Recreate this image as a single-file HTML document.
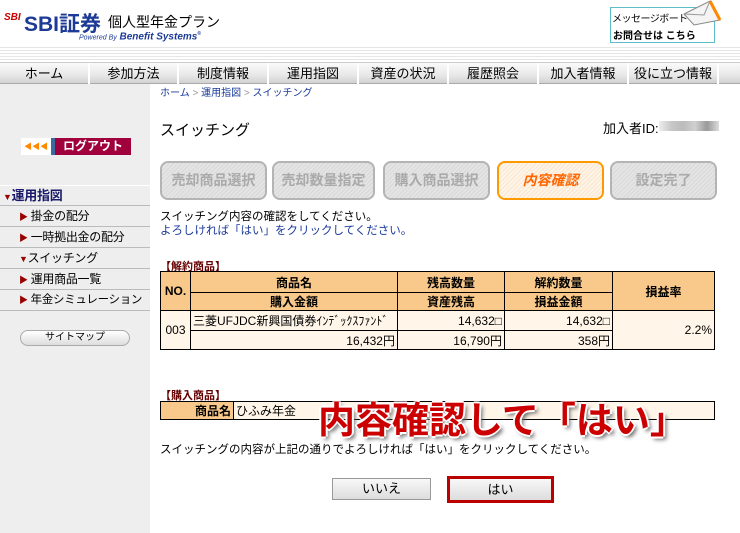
<!DOCTYPE html>
<html><head><meta charset="utf-8"><style>
*{margin:0;padding:0;box-sizing:border-box}
body{width:740px;height:533px;overflow:hidden;background:#fff;font-family:"Liberation Sans","Noto Sans CJK JP",sans-serif;font-size:12px;color:#000;position:relative}
.a{position:absolute;white-space:nowrap}
.stripe{position:absolute;left:0;top:45px;width:740px;height:17px;background:repeating-linear-gradient(#fff 0,#fff 2px,#e6e6e6 2px,#e6e6e6 3px)}
.nav{position:absolute;left:0;top:62px;width:740px;height:22px;background:linear-gradient(#fafafa,#e8e8e8 60%,#d2d2d2);border-top:1px solid #ccc;border-bottom:1px solid #aaa}
.nav div{position:absolute;top:0;height:21px;line-height:21px;text-align:center;font-size:13px;border-right:2px solid #fff}
.side{position:absolute;left:0;top:84px;width:150px;height:449px;background:#eee}
.mi{position:absolute;left:0;width:150px;border-bottom:1px solid #bbb;font-size:12px;height:21px;line-height:20px;white-space:nowrap;overflow:hidden;letter-spacing:-0.3px}
.tri{color:#900;font-size:9px}
.step{position:absolute;top:161px;height:39px;border:2px solid #b4b4b4;border-radius:8px;background:repeating-linear-gradient(135deg,#e4e4e4 0,#e4e4e4 2px,#d8d8d8 2px,#d8d8d8 3px);color:#aaa;font-weight:bold;font-size:14px;line-height:35px;text-align:center;white-space:nowrap}
table{border-collapse:collapse;position:absolute}
td{border:1px solid #000;font-size:12px;padding:0 2px}
.h{background:#f8c98a;font-weight:bold;text-align:center}
.d{background:#fff6e9}
</style></head><body>
<div class="a" style="left:4px;top:12px;font-size:10px;font-weight:bold;color:#c00;font-style:italic">SBI</div>
<div class="a" style="left:24px;top:8px;font-size:21px;font-weight:bold;color:#1c3a96">SBI証券</div>
<div class="a" style="left:108px;top:12px;font-size:14px">個人型年金プラン</div>
<div class="a" style="left:79px;top:31px;font-size:10px;font-weight:bold;font-style:italic;color:#1c3a96"><span style="font-size:7px;font-weight:normal">Powered By</span> Benefit Systems<sup style="font-size:5px">®</sup></div>
<div class="a" style="left:610px;top:7px;width:105px;height:36px;border:1px solid #5bbec8;background:#fff">
<div style="font-size:10px;padding:2px 1px;letter-spacing:-0.5px">メッセージボード</div>
<div style="font-size:10px;font-weight:bold;padding:0 2px">お問合せは こちら</div></div>
<svg class="a" style="left:682px;top:0" width="40" height="26"><path d="M2 14 L28 1 L38 20 L12 25Z" fill="#f4f4f4" stroke="#888"/><path d="M28 1 L38 20" stroke="#f80" stroke-width="3"/><path d="M2 14 L22 15 L28 1" fill="none" stroke="#999"/></svg>
<div class="stripe"></div>
<div class="nav">
<div style="left:0;width:90px">ホーム</div><div style="left:90px;width:89px">参加方法</div><div style="left:179px;width:90px">制度情報</div><div style="left:269px;width:90px">運用指図</div><div style="left:359px;width:90px">資産の状況</div><div style="left:449px;width:90px">履歴照会</div><div style="left:539px;width:90px">加入者情報</div><div style="left:629px;width:90px">役に立つ情報</div>
</div>
<div class="side">
<div class="a" style="left:21px;top:54px;width:110px;height:17px;border-bottom:2px solid #222"><div style="position:absolute;left:0;width:30px;height:17px;background:#fff;color:#f80;font-size:8px;line-height:17px;text-align:center">◀◀◀</div><div style="position:absolute;left:30px;width:4px;height:17px;background:#3a6aa0"></div><div style="position:absolute;left:34px;width:76px;height:17px;background:#a0003c;color:#fff;font-weight:bold;font-size:12px;line-height:17px;text-align:center">ログアウト</div></div>
<div class="mi" style="top:101px;border-top:1px solid #fff;font-weight:bold;color:#1a1a6a;font-size:13px;padding-left:3px"><span class="tri">▼</span>運用指図</div>
<div class="mi" style="top:122px;padding-left:19px"><span class="tri">▶</span> 掛金の配分</div>
<div class="mi" style="top:143px;padding-left:19px"><span class="tri">▶</span> 一時拠出金の配分</div>
<div class="mi" style="top:164px;padding-left:19px"><span class="tri">▼</span>スイッチング</div>
<div class="mi" style="top:185px;padding-left:19px"><span class="tri">▶</span> 運用商品一覧</div>
<div class="mi" style="top:206px;padding-left:19px;font-size:11.5px"><span class="tri">▶</span> 年金シミュレーション</div>
<div class="a" style="left:20px;top:246px;width:110px;height:16px;border:1px solid #aaa;border-radius:8px;background:linear-gradient(#fff,#ddd);font-size:10px;text-align:center;line-height:14px">サイトマップ</div>
</div>
<div class="a" style="left:160px;top:84px;font-size:10px;color:#1a3a9a">ホーム <span style="color:#999">&gt;</span> 運用指図 <span style="color:#999">&gt;</span> スイッチング</div>
<div class="a" style="left:160px;top:119px;font-size:15px">スイッチング</div>
<div class="a" style="left:603px;top:118px;font-size:13px">加入者ID:</div>
<div class="a" style="left:659px;top:121px;width:60px;height:10px;background:linear-gradient(90deg,#eee,#c8c8c8,#bbb,#d0d0d0,#999,#ddd)"></div>
<div class="step" style="left:160px;width:107px">売却商品選択</div>
<div class="step" style="left:272px;width:103px">売却数量指定</div>
<div class="step" style="left:383px;width:107px">購入商品選択</div>
<div class="step" style="left:497px;width:107px;border-color:#f90;background:repeating-linear-gradient(135deg,#fff4e6 0,#fff4e6 2px,#f6e6d2 2px,#f6e6d2 3px);color:#f60;font-style:italic">内容確認</div>
<div class="step" style="left:610px;width:107px">設定完了</div>
<div class="a" style="left:160px;top:210px;font-size:11.5px;line-height:14px">スイッチング内容の確認をしてください。<br><span style="color:#1a3a9a">よろしければ「はい」をクリックしてください。</span></div>
<div class="a" style="left:160px;top:258px;font-size:11px;font-weight:bold;color:#600">【解約商品】</div>
<table style="left:160px;top:271px;width:555px">
<tr style="height:21px"><td class="h" rowspan="2" style="width:30px">NO.</td><td class="h" style="width:207px">商品名</td><td class="h" style="width:107px">残高数量</td><td class="h" style="width:108px">解約数量</td><td class="h" rowspan="2">損益率</td></tr>
<tr style="height:16px"><td class="h">購入金額</td><td class="h">資産残高</td><td class="h">損益金額</td></tr>
<tr style="height:20px"><td class="d" rowspan="2" style="text-align:center">003</td><td class="d">三菱UFJDC新興国債券ｲﾝﾃﾞｯｸｽﾌｧﾝﾄﾞ</td><td class="d" style="text-align:right">14,632□</td><td class="d" style="text-align:right">14,632□</td><td class="d" rowspan="2" style="text-align:right">2.2%</td></tr>
<tr style="height:19px"><td class="d" style="text-align:right">16,432円</td><td class="d" style="text-align:right">16,790円</td><td class="d" style="text-align:right">358円</td></tr>
</table>
<div class="a" style="left:160px;top:387px;font-size:11px;font-weight:bold;color:#600">【購入商品】</div>
<table style="left:160px;top:401px;width:555px">
<tr style="height:17px"><td class="h" style="width:73px;text-align:right">商品名</td><td class="d">ひふみ年金</td></tr></table>
<div class="a" style="left:318px;top:390px;font-size:37px;font-weight:bold;color:#c00;text-shadow:2px 0 #fff,-2px 0 #fff,0 2px #fff,0 -2px #fff,3px 3px 4px #666">内容確認して「はい」</div>
<div class="a" style="left:160px;top:441px;font-size:11.5px">スイッチングの内容が上記の通りでよろしければ「はい」をクリックしてください。</div>
<div class="a" style="left:332px;top:478px;width:99px;height:22px;border:1px solid #999;background:linear-gradient(#f8f8f8,#ddd);text-align:center;line-height:20px;font-size:13px">いいえ</div>
<div class="a" style="left:447px;top:476px;width:107px;height:27px;border:3px solid #b00;background:linear-gradient(#f8f8f8,#ddd);text-align:center;line-height:21px;font-size:13px">はい</div>
</body></html>
